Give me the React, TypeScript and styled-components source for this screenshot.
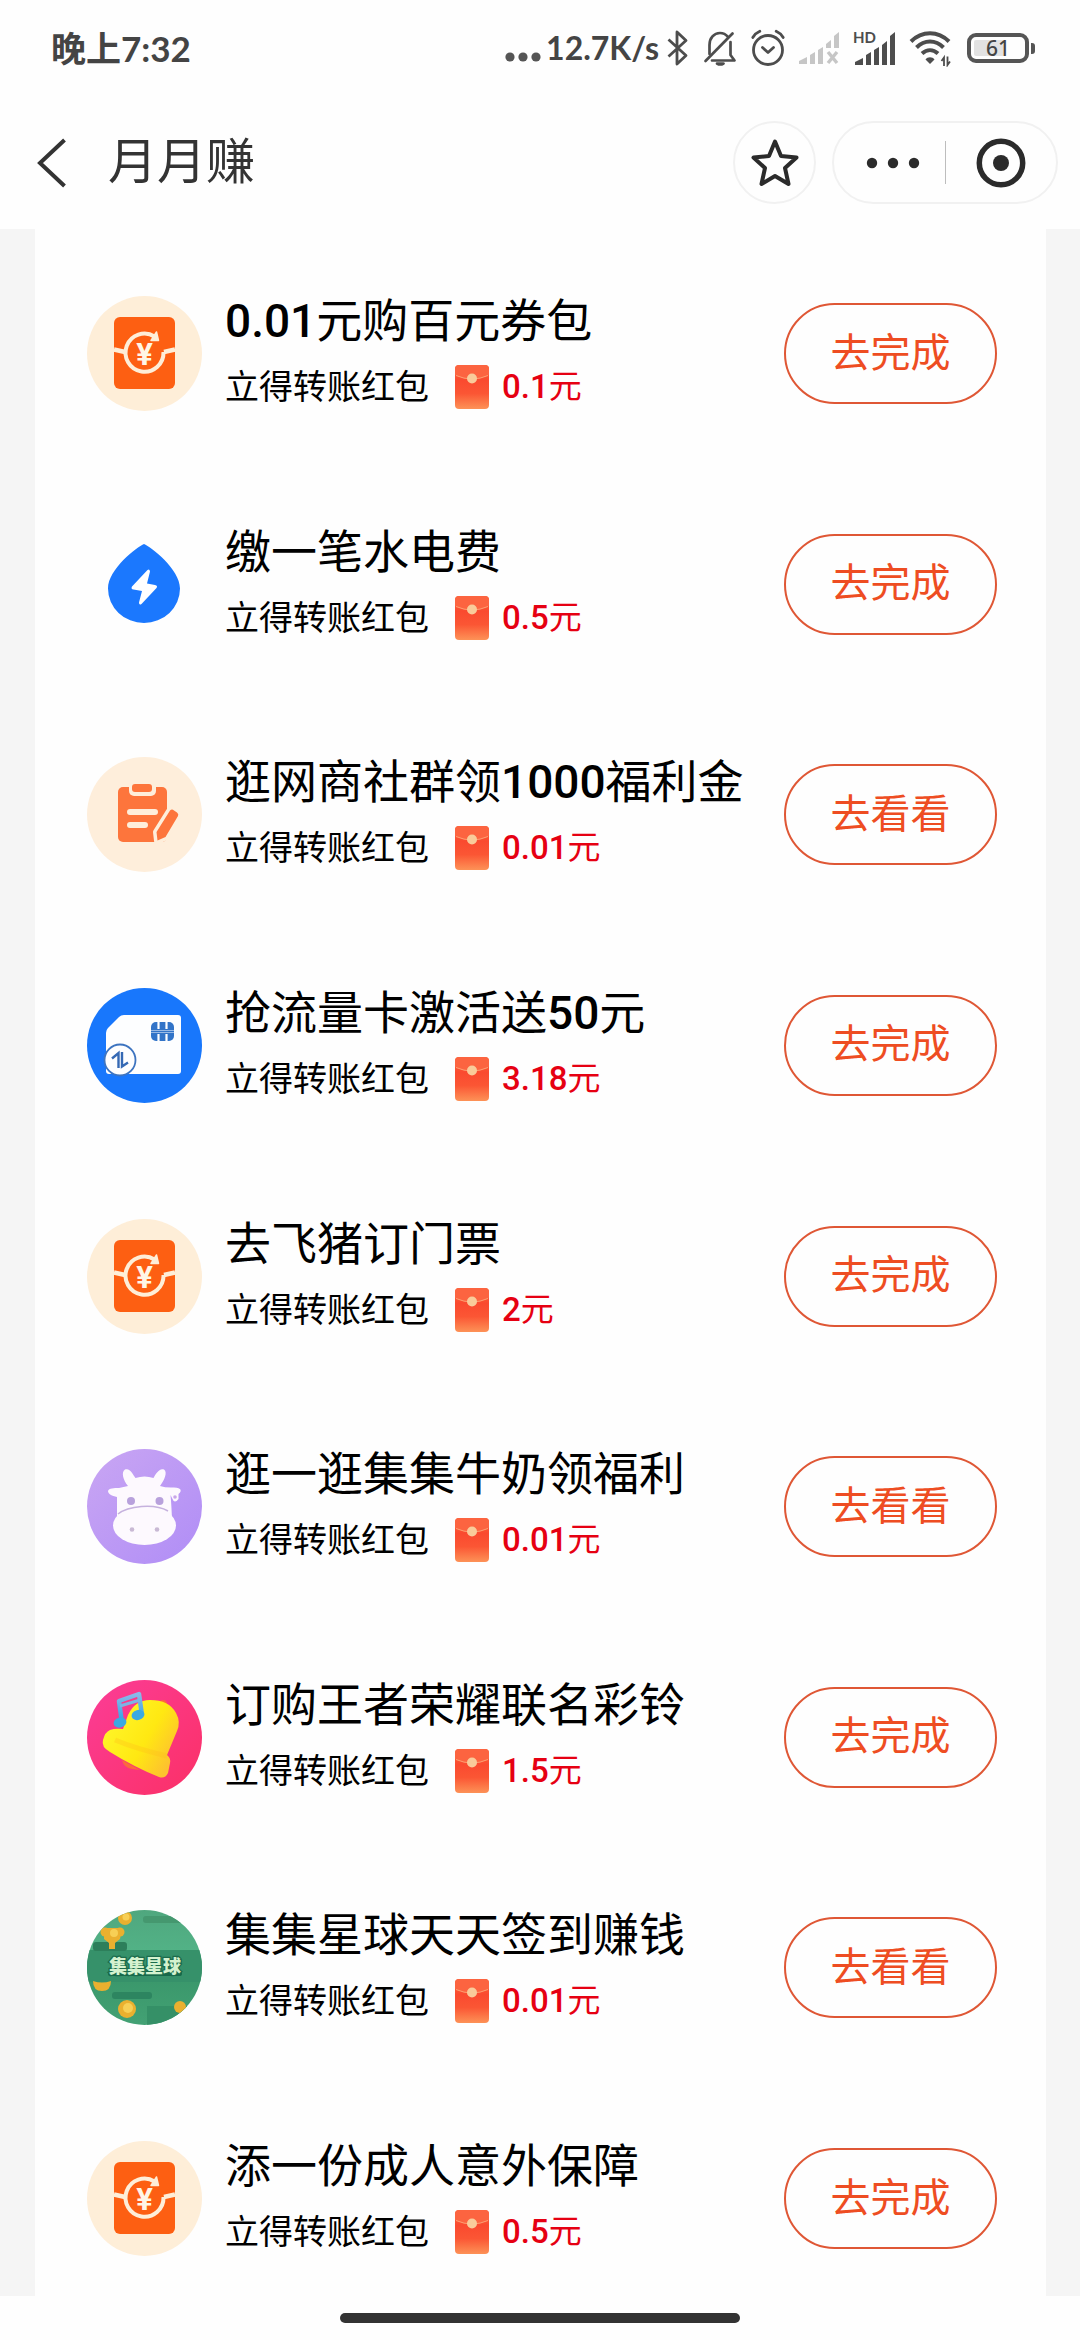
import React from 'react';
import styled, { createGlobalStyle } from 'styled-components';

const GlobalStyle = createGlobalStyle`
  *, *::before, *::after { box-sizing: border-box; }
  body {
    margin: 0;
    background: #fefefe;
    color: #000;
    font-family: Roboto, "Noto Sans CJK SC", sans-serif;
  }
  button { font: inherit; color: inherit; background: none; border: 0; padding: 0; cursor: pointer; }
  svg { display: block; flex: none; }
`;

const Page = styled.div`
  min-height: 100vh;
  display: flex;
  flex-direction: column;
`;

const StatusBar = styled.div`
  display: flex;
  align-items: center;
  justify-content: space-between;
  height: 96px;
  padding: 0 45px 0 51px;
  color: #444;
  font-family: Lato, "Noto Sans CJK SC", sans-serif;
  font-weight: 700;
  font-size: 35px;
  line-height: 40px;
`;

const StatusIcons = styled.div`
  display: flex;
  align-items: center;
  gap: 14px;
`;

const NetSpeed = styled.span`
  display: flex;
  align-items: center;
  gap: 5px;
  margin-right: -6px;
  font-size: 32px;
`;

const Battery = styled.span`
  display: flex;
  align-items: center;
  gap: 2px;
  &::after {
    content: "";
    width: 4px;
    height: 11px;
    border-radius: 0 3px 3px 0;
    background: #555;
  }
`;

const BatteryBody = styled.span`
  width: 62px;
  height: 30px;
  border: 4px solid #555;
  border-radius: 9px;
  background: linear-gradient(90deg, #e2e2e2 61%, #fefefe 61%) content-box;
  padding: 3px;
  display: flex;
  align-items: center;
  justify-content: center;
  font-family: "Noto Sans", sans-serif;
  font-weight: 500;
  font-size: 21px;
  line-height: 20px;
`;

const TitleBar = styled.header`
  display: flex;
  align-items: center;
  height: 133px;
  padding: 0 22px 0 36px;
  color: #333;
`;

const BackButton = styled.button`
  width: 72px;
  height: 82px;
  display: flex;
  align-items: center;
`;

const PageTitle = styled.h1`
  flex: 1;
  margin: 0;
  font-weight: 400;
  font-size: 49px;
  line-height: 64px;
`;

const StarButton = styled.button`
  width: 83px;
  height: 83px;
  border: 2px solid #f1f1f1;
  border-radius: 50%;
  display: grid;
  place-items: center;
  margin-right: 16px;
`;

const Capsule = styled.div`
  width: 226px;
  height: 83px;
  border: 2px solid #f1f1f1;
  border-radius: 42px;
  display: flex;
  align-items: center;
`;

const CapsuleButton = styled.button`
  flex: 0 0 50%;
  height: 100%;
  display: grid;
  place-items: center;
  &:first-child {
    padding-left: 6px;
  }
  & + & {
    position: relative;
  }
  & + &::before {
    content: "";
    position: absolute;
    left: 0;
    top: 18px;
    bottom: 18px;
    width: 1px;
    background: #bdbdbd;
  }
`;

const Main = styled.main`
  flex: 1;
  display: flex;
  padding: 0 34px 0 35px;
  background: #f5f5f5;
`;

const TaskList = styled.ul`
  flex: 1;
  margin: 0;
  padding: 67px 49px 40px 52px;
  list-style: none;
  background: #fefefe;
  display: flex;
  flex-direction: column;
  justify-content: space-between;
`;

const TaskRow = styled.li`
  display: flex;
  align-items: center;
  height: 115px;
`;

const TaskText = styled.div`
  flex: 1;
  min-width: 0;
  padding-left: 23px;
`;

const TaskName = styled.h2`
  margin: 0;
  font-weight: 400;
  font-size: 46px;
  line-height: 54px;
  white-space: nowrap;
`;

const Digits = styled.span`
  font-weight: 500;
`;

const TaskReward = styled.p`
  display: flex;
  align-items: center;
  height: 52px;
  margin: 13px 0 0;
  font-size: 34px;
  line-height: 52px;
`;

const RewardAmount = styled.strong`
  display: flex;
  align-items: center;
  gap: 13px;
  margin-left: 26px;
  color: #e60012;
  font-weight: 400;
  font-size: 33px;
`;

const ActionButton = styled.button`
  flex: none;
  width: 213px;
  height: 101px;
  border: 2px solid #df5735;
  border-radius: 51px;
  color: #ee4d22;
  font-size: 40px;
  line-height: 60px;
`;

const HomeIndicator = styled.footer`
  height: 44px;
  display: flex;
  align-items: center;
  justify-content: center;
  &::before {
    content: "";
    width: 37%;
    height: 10px;
    border-radius: 5px;
    background: #333;
  }
`;

/* ---------- status bar glyphs ---------- */

const Dots = () => (
  <svg width="36" height="34" viewBox="0 0 36 34" fill="#555">
    <circle cx="5" cy="26" r="4.6" />
    <circle cx="18" cy="26" r="4.6" />
    <circle cx="31" cy="26" r="4.6" />
  </svg>
);

const Bluetooth = () => (
  <svg width="22" height="36" viewBox="0 0 22 36" fill="none" stroke="#4d4d4d" strokeWidth="2.8" strokeLinejoin="round">
    <path d="M1.500 9.500 19 25.500 10 34V2l9 8.500L1.500 26.500" />
  </svg>
);

const Muted = () => (
  <svg width="34" height="36" viewBox="0 0 34 36" fill="none" stroke="#4d4d4d" strokeWidth="2.700" strokeLinecap="round" strokeLinejoin="round">
    <path d="M6.500 24V15C6.500 8 11 3 17 3c3.500 0 6 1.500 8 3.800M27.500 12v13l4 5.500H9" />
    <path d="M29.500 3.500 2.500 31" />
    <path d="M14 33.500c2 1.200 4.500 1.200 6.500 0z" fill="#4d4d4d" />
  </svg>
);

const Alarm = () => (
  <svg width="34" height="38" viewBox="0 0 34 38" fill="none" stroke="#4d4d4d" strokeWidth="2.800" strokeLinecap="round" strokeLinejoin="round">
    <circle cx="17" cy="21" r="14.500" />
    <path d="M1.800 8.500C3.500 5.500 6 3.500 8.800 2.300M32.200 8.500c-1.700-3-4.200-5-7-6.200M11.500 18.500l5.500 5 5.500-5" />
  </svg>
);

const SignalNone = () => (
  <svg width="40" height="34" viewBox="0 0 40 34" fill="#c6c6c6">
    <path d="M0 33v-3l8-4v7zM11 24l5-3v12h-5zM19 19l5-3v17h-5zM27 13l5-4v8h-5zM35 5l5-4v16h-5z" />
    <path d="m29 21 9 11M38 21l-9 11" stroke="#c6c6c6" strokeWidth="3.400" />
  </svg>
);

const HdLabel = styled.text`
  font-family: Lato, sans-serif;
  font-weight: 700;
  font-size: 15px;
`;

const SignalHd = () => (
  <svg width="42" height="48" viewBox="0 -6 42 48" fill="#4d4d4d">
    <HdLabel x="0" y="13">HD</HdLabel>
    <path d="M2 35v-3l8-4v7zM13 25l5-3v13h-5zM21 20l5-3v18h-5zM29 15l5-4v24h-5zM37 6l5-4v33h-5z" />
  </svg>
);

const Wifi = () => (
  <svg width="44" height="38" viewBox="0 0 44 38" fill="none" stroke="#4d4d4d" strokeWidth="4">
    <path d="M2 12.500c11-11 27-11 38 0M7.500 18.500c8-8 19-8 27 0M13 24.500c5-4.500 11-4.500 16 0" />
    <path d="m21 35-4.500-4.500c2-3 7-3 9 0z" fill="#4d4d4d" stroke="none" />
    <path d="M35 37V28.500l-2.500 3.500M38.500 27.500V36l2.500-3.500" strokeWidth="1.800" />
  </svg>
);

/* ---------- title bar glyphs ---------- */

const Back = () => (
  <svg width="32" height="50" viewBox="0 0 32 50" fill="none" stroke="#333" strokeWidth="4">
    <path d="M28.500 2 4 25l24.500 23" />
  </svg>
);

const Star = () => (
  <svg width="48" height="50" viewBox="0 0 48 50" fill="none" stroke="#2b2b2b" strokeWidth="4" strokeLinejoin="round">
    <path d="M24 3.500l6 14.500 15.500 1.500-11.500 10.500 3.500 16L24 38 10.500 46 14 30 2.500 19.500 18 18z" />
  </svg>
);

const More = () => (
  <svg width="54" height="12" viewBox="0 0 54 12" fill="#2b2b2b">
    <circle cx="6" cy="6" r="5.200" />
    <circle cx="27" cy="6" r="5.200" />
    <circle cx="48" cy="6" r="5.200" />
  </svg>
);

const Target = () => (
  <svg width="50" height="50" viewBox="0 0 50 50">
    <circle cx="25" cy="25" r="21.700" fill="none" stroke="#2b2b2b" strokeWidth="5.500" />
    <circle cx="25" cy="25" r="8" fill="#2b2b2b" />
  </svg>
);

/* ---------- task artwork ---------- */

const Art = ({ children }: { children: React.ReactNode }) => (
  <svg width="115" height="115" viewBox="0 0 115 115" aria-hidden="true">
    {children}
  </svg>
);

const YenMark = styled.text`
  font-family: Roboto, sans-serif;
  font-weight: 700;
  font-size: 31px;
`;

const LogoWord = styled.text`
  font-family: "Noto Sans CJK SC", sans-serif;
  font-weight: 900;
  font-size: 18px;
`;

const CouponArt = () => (
  <Art>
    <circle cx="57.500" cy="57.500" r="57.500" fill="#feeed8" />
    <rect x="27" y="21" width="61" height="72" rx="6" fill="#fd5f12" />
    <path d="M27 53.500 38 56M77 56l11-2.500" stroke="#feeed8" strokeWidth="4.500" fill="none" />
    <circle cx="57.500" cy="57" r="18" fill="#fd5f12" />
    <path d="M76.500 56a19 19 0 1 1-9-15.500" stroke="#feeed8" strokeWidth="4" fill="none" />
    <path d="M64 44.500 69.500 36l2 8.500z" fill="#feeed8" stroke="#feeed8" strokeWidth="1.500" strokeLinejoin="round" />
    <YenMark x="57.500" y="68.500" textAnchor="middle" fill="#fff5e6">¥</YenMark>
  </Art>
);

const UtilityArt = () => (
  <Art>
    <path d="M57 17c7 3 36 25 36 44.500a36 34.500 0 0 1-72 0C21 42 50 20 57 17z" fill="#1b78fe" />
    <path d="M60.500 43 45 59.500q-1.500 2.500 1.500 3l8.500 1.500-3 11.500q0 3 2.500 1.500L69.500 61q1.500-2.500-1.500-3l-8-1.500 3-12q-.500-3-2.500-1.500z" fill="#fff" />
  </Art>
);

const ClipboardArt = () => (
  <Art>
    <circle cx="57.500" cy="57.500" r="57.500" fill="#feeedb" />
    <rect x="31" y="30" width="49" height="55" rx="5" fill="#fd753c" />
    <rect x="42" y="23" width="27" height="16" rx="5" fill="#feeedb" />
    <rect x="45" y="27" width="20" height="8" rx="3" fill="#fd753c" />
    <path d="M43 55h25M43 68h15" stroke="#feeedb" strokeWidth="6" strokeLinecap="round" />
    <path d="M83 53.500q2-2 4 0l3 2q2 1.500 1 3.500L78.500 80 70.500 83.500 69.500 75z" fill="#fd753c" stroke="#feeedb" strokeWidth="7" strokeLinejoin="round" />
    <path d="M83 53.500q2-2 4 0l3 2q2 1.500 1 3.500L78.500 80 70.500 83.500 69.500 75z" fill="#fd753c" />
  </Art>
);

const SimArt = () => (
  <Art>
    <circle cx="57.500" cy="57.500" r="57.500" fill="#1877fc" />
    <path d="M37 27h54q3 0 3 3v53q0 3-3 3H22q-3 0-3-3V45q0-3 2-5L32 29q2-2 5-2z" fill="#fdfeff" />
    <rect x="64" y="34" width="23" height="19" rx="5" fill="#3274c8" />
    <path d="M64 43.500h23M71.500 34v7M79.500 34v7M71.500 46v7M79.500 46v7" stroke="#fdfeff" strokeWidth="2.200" />
    <path d="M64 43.500h23" stroke="#3274c8" strokeWidth="1" />
    <circle cx="33" cy="72" r="15.500" fill="#fdfeff" stroke="#3d74c0" strokeWidth="1.800" />
    <path d="M25 70.500l6.500-5.500v15M35 64v14.500l6-4" fill="none" stroke="#3569b4" strokeWidth="2.400" />
  </Art>
);

const CowArt = () => (
  <Art>
    <defs>
      <linearGradient id="cow-bg" x1="0" y1="0" x2="1" y2="1">
        <stop offset="0" stopColor="#c9a6f3" />
        <stop offset="1" stopColor="#b08df6" />
      </linearGradient>
    </defs>
    <circle cx="57.500" cy="57.500" r="57.500" fill="url(#cow-bg)" />
    <g fill="#fdf9fe">
      <path d="M41 37c-5-6-7-14-3-16.500 5-2 8 5 10.500 8.500q9-3 18 0c2-4 6-10.500 10.500-8.500 4 3 0 11-4 16.500q6 2 14 1.500c8 0 8 4 4.500 6.500V50q-4 5-6 0l-2-4q1 10 1.500 25H30V48c-5-1-9-3-9-6 1-3 6-3 11-3z" />
      <ellipse cx="57.500" cy="76.500" rx="31.500" ry="19.500" />
    </g>
    <path d="M31 65c10-8 36-11 50-3" fill="none" stroke="#c6b2de" strokeWidth="1.600" />
    <circle cx="44" cy="52" r="4" fill="#b8a1dc" />
    <circle cx="72.500" cy="52" r="4" fill="#b8a1dc" />
    <circle cx="45" cy="80.500" r="2.300" fill="#c9b9d4" />
    <circle cx="70" cy="80.500" r="2.300" fill="#c9b9d4" />
    <circle cx="88" cy="48" r="1.800" fill="#c9a6e8" />
  </Art>
);

const BellArt = () => (
  <Art>
    <defs>
      <linearGradient id="bell-bg" x1="0" y1="0" x2="1" y2="1">
        <stop offset="0" stopColor="#fb3d97" />
        <stop offset="1" stopColor="#fb3066" />
      </linearGradient>
      <linearGradient id="bell-body" x1="0" y1="0" x2="1" y2=".600">
        <stop offset="0" stopColor="#fffa30" />
        <stop offset=".650" stopColor="#ffe812" />
        <stop offset="1" stopColor="#fdc22e" />
      </linearGradient>
      <linearGradient id="bell-note" x1="0" y1="0" x2="0" y2="1">
        <stop offset="0" stopColor="#8bb9e8" />
        <stop offset="1" stopColor="#29a3e6" />
      </linearGradient>
    </defs>
    <circle cx="57.500" cy="57.500" r="57.500" fill="url(#bell-bg)" />
    <path d="M73 21q5-3 7 2l2 6zM35 80q2 8 10 9l8 1z" fill="#fb6a3c" />
    <path d="M23 50q5-2 13-1l5-14q7-15 22-15 19 0 26 13 5 9 1 18L80 75q4 3 3 8l-2 10q-3 6-9 4-25-10-49-25-9-5-7-12 2-8 7-10z" fill="url(#bell-body)" />
    <path d="M28 60q22 9 52 16" fill="none" stroke="#ffb81c" strokeOpacity=".300" strokeWidth="5" />
    <path d="M35 43 32 21l20-7 3 21" fill="none" stroke="url(#bell-note)" strokeWidth="4.500" strokeLinejoin="round" />
    <path d="M33 26l20-6" stroke="#7db4e4" strokeWidth="3" />
    <ellipse cx="33" cy="42.500" rx="6.500" ry="5" fill="#3ba9e2" transform="rotate(-15 33 42.500)" />
    <ellipse cx="51" cy="35" rx="6.500" ry="5" fill="#3ba9e2" transform="rotate(-15 51 35)" />
  </Art>
);

const PlanetArt = () => (
  <Art>
    <defs>
      <clipPath id="planet-clip">
        <circle cx="57.500" cy="57.500" r="57.500" />
      </clipPath>
      <linearGradient id="planet-bg" x1="0" y1="0" x2="0" y2="1">
        <stop offset="0" stopColor="#4fa77e" />
        <stop offset=".350" stopColor="#52b286" />
        <stop offset=".450" stopColor="#379468" />
        <stop offset="1" stopColor="#43a174" />
      </linearGradient>
    </defs>
    <g clipPath="url(#planet-clip)">
      <rect width="115" height="115" fill="url(#planet-bg)" />
      <rect y="40" width="115" height="32" fill="#36916a" />
      <rect x="6" y="32" width="34" height="9" rx="3" fill="#2d7f5b" />
      <rect x="56" y="6" width="44" height="7" rx="3" fill="#45986f" />
      <rect x="25" y="82" width="40" height="7" rx="3" fill="#2d8560" />
      <rect x="60" y="96" width="55" height="19" fill="#359067" />
      <rect x="21" y="61" width="74" height="5" rx="2" fill="#17684a" />
      <g fill="#eab02f">
        <circle cx="38" cy="8" r="7" />
        <circle cx="40" cy="99" r="9" />
        <circle cx="93" cy="97" r="6" />
        <path d="M6 71q9 3 18 0 0 10-9 10T6 71z" />
        <path d="M17 18h18l-2 11-5 4v6h-6v-6l-5-4z" />
        <circle cx="18" cy="22" r="4.500" />
        <circle cx="33" cy="22" r="4.500" />
      </g>
      <g fill="#f7cf55">
        <circle cx="39" cy="7" r="3.500" />
        <circle cx="41" cy="98" r="5" />
        <circle cx="27" cy="23" r="4" />
      </g>
      <LogoWord x="58" y="63" textAnchor="middle" fill="#d4f2cf" stroke="#1c6b4c" strokeWidth="2.500" paintOrder="stroke">
        集集星球
      </LogoWord>
    </g>
  </Art>
);

const Envelope = () => (
  <svg width="34" height="44" viewBox="0 0 34 44" aria-hidden="true">
    <defs>
      <linearGradient id="envelope-body" x1="0" y1="0" x2="0" y2="1">
        <stop offset="0" stopColor="#fb6a3b" />
        <stop offset=".350" stopColor="#fa4a2f" />
        <stop offset=".650" stopColor="#fb5634" />
        <stop offset="1" stopColor="#fd9257" />
      </linearGradient>
    </defs>
    <rect width="34" height="44" rx="4" fill="url(#envelope-body)" />
    <path d="M0 10q17 8 34 0V4q0-4-4-4H4Q0 0 0 4z" fill="#fc6440" />
    <path d="M1 10.500q16 7 32 0" fill="none" stroke="#fda174" strokeWidth="1" />
    <circle cx="17" cy="13.500" r="5" fill="#f9cb9a" />
  </svg>
);

/* ---------- data ---------- */

type Task = {
  art: () => React.ReactElement;
  name: string;
  amount: string;
  action: string;
};

const tasks: Task[] = [
  { art: CouponArt, name: '0.01元购百元券包', amount: '0.1元', action: '去完成' },
  { art: UtilityArt, name: '缴一笔水电费', amount: '0.5元', action: '去完成' },
  { art: ClipboardArt, name: '逛网商社群领1000福利金', amount: '0.01元', action: '去看看' },
  { art: SimArt, name: '抢流量卡激活送50元', amount: '3.18元', action: '去完成' },
  { art: CouponArt, name: '去飞猪订门票', amount: '2元', action: '去完成' },
  { art: CowArt, name: '逛一逛集集牛奶领福利', amount: '0.01元', action: '去看看' },
  { art: BellArt, name: '订购王者荣耀联名彩铃', amount: '1.5元', action: '去完成' },
  { art: PlanetArt, name: '集集星球天天签到赚钱', amount: '0.01元', action: '去看看' },
  { art: CouponArt, name: '添一份成人意外保障', amount: '0.5元', action: '去完成' },
];

/* Numbers inside a phrase are set heavier than the characters around them. */
const Phrase = ({ text }: { text: string }) => (
  <span>
    {text
      .split(/([\d.]+)/)
      .filter(Boolean)
      .map((part, i) => (/\d/.test(part) ? <Digits key={i}>{part}</Digits> : part))}
  </span>
);

export default function App() {
  return (
    <Page>
      <GlobalStyle />
      <StatusBar>
        <span>晚上7:32</span>
        <StatusIcons>
          <NetSpeed>
            <Dots />
            12.7K/s
          </NetSpeed>
          <Bluetooth />
          <Muted />
          <Alarm />
          <SignalNone />
          <SignalHd />
          <Wifi />
          <Battery>
            <BatteryBody>61</BatteryBody>
          </Battery>
        </StatusIcons>
      </StatusBar>
      <TitleBar>
        <BackButton aria-label="返回">
          <Back />
        </BackButton>
        <PageTitle>月月赚</PageTitle>
        <StarButton aria-label="收藏">
          <Star />
        </StarButton>
        <Capsule>
          <CapsuleButton aria-label="更多">
            <More />
          </CapsuleButton>
          <CapsuleButton aria-label="关闭">
            <Target />
          </CapsuleButton>
        </Capsule>
      </TitleBar>
      <Main>
        <TaskList>
          {tasks.map(({ art: Artwork, name, amount, action }) => (
            <TaskRow key={name}>
              <Artwork />
              <TaskText>
                <TaskName>
                  <Phrase text={name} />
                </TaskName>
                <TaskReward>
                  立得转账红包
                  <RewardAmount>
                    <Envelope />
                    <Phrase text={amount} />
                  </RewardAmount>
                </TaskReward>
              </TaskText>
              <ActionButton>{action}</ActionButton>
            </TaskRow>
          ))}
        </TaskList>
      </Main>
      <HomeIndicator />
    </Page>
  );
}
